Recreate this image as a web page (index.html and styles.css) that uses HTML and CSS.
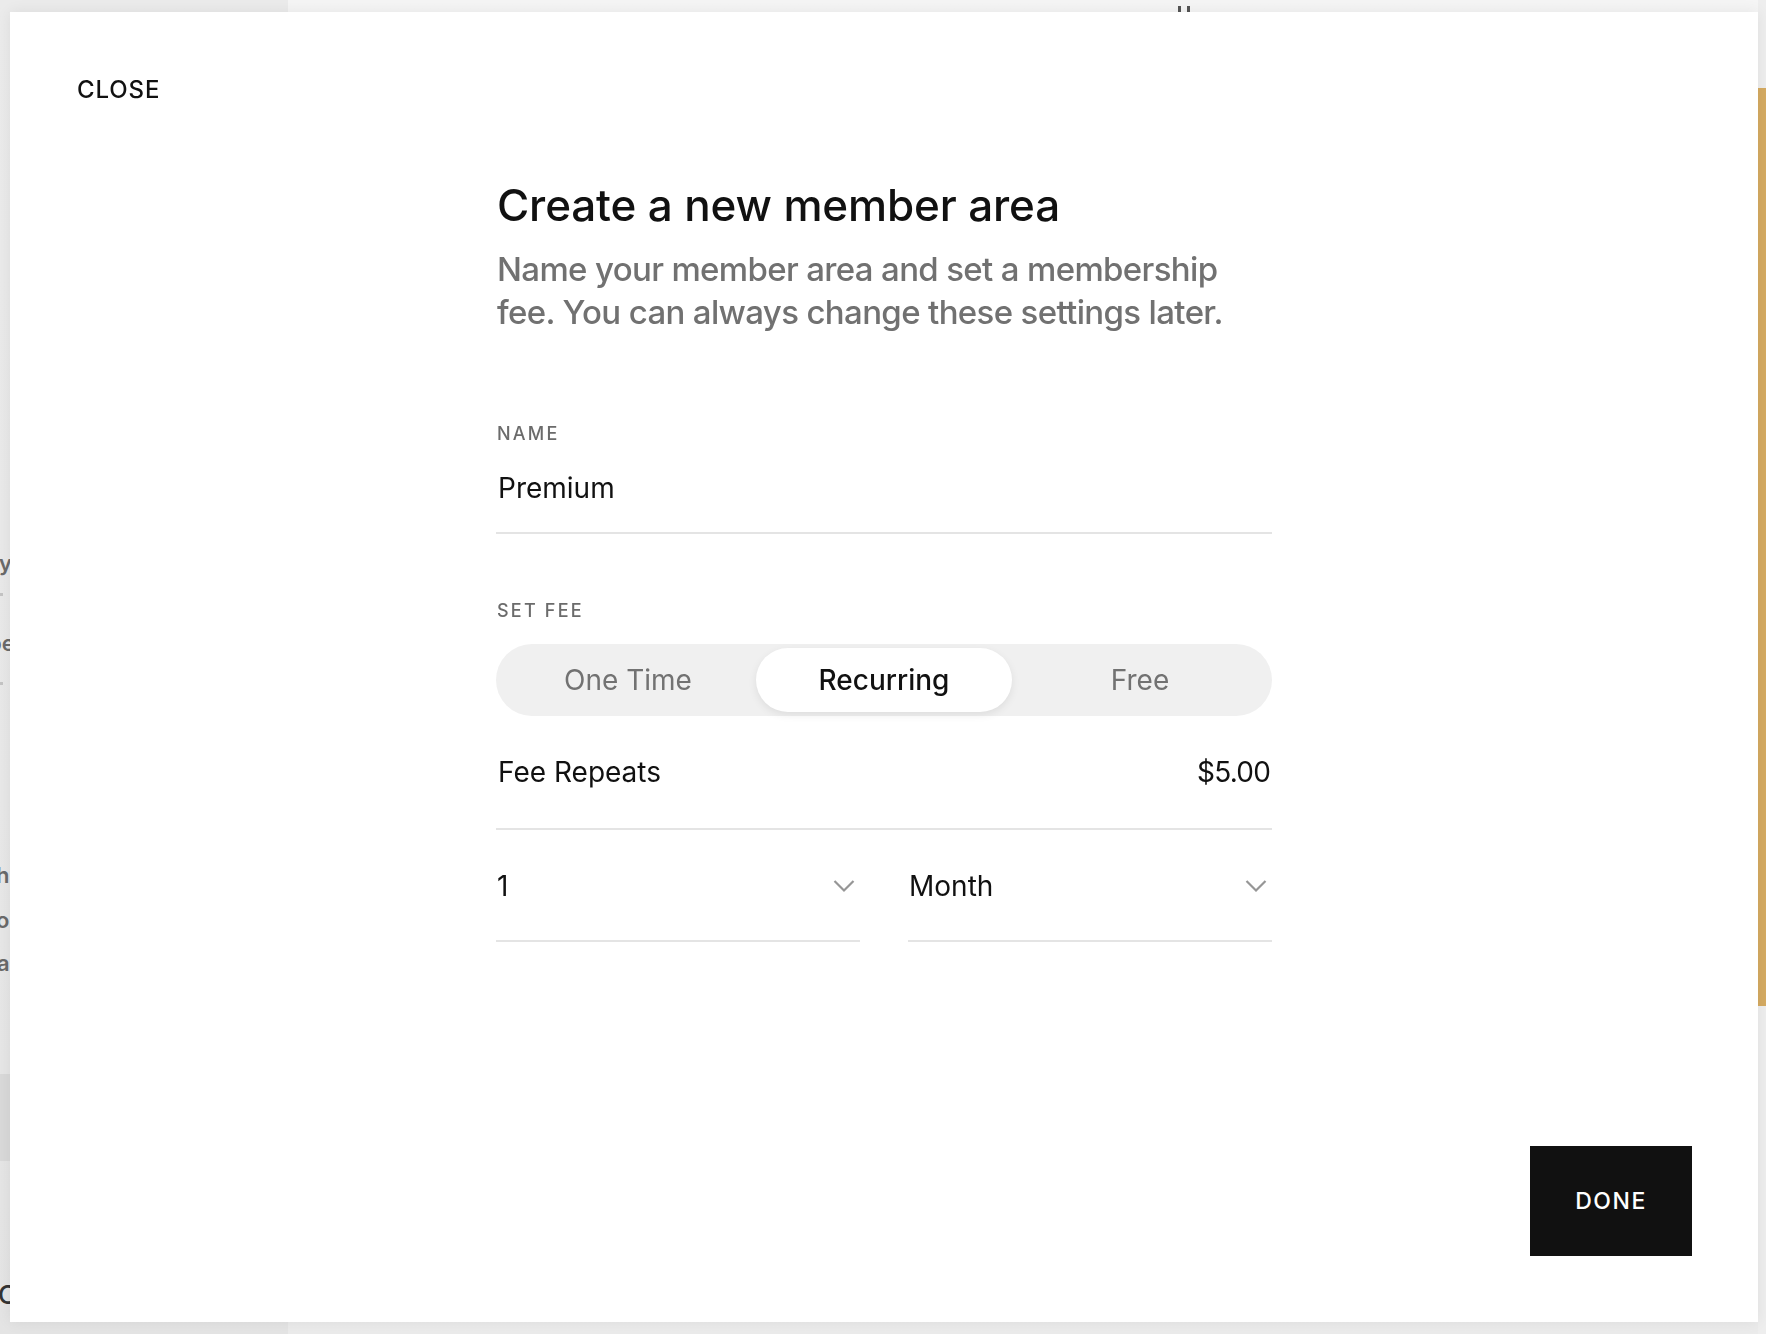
FILE: index.html
```html
<!DOCTYPE html>
<html lang="en">
<head>
<meta charset="utf-8">
<title>Create a new member area</title>
<link rel="stylesheet" href="styles.css">
</head>
<body>
  <div class="page">
    <aside class="sidebar">
      <div class="frag frag-y">y</div>
      <div class="dot dot-1"></div>
      <div class="frag frag-pe">pe</div>
      <div class="dot dot-2"></div>
      <div class="frag frag-h">h</div>
      <div class="frag frag-o">o</div>
      <div class="frag frag-a">a</div>
      <div class="side-block"></div>
      <div class="frag frag-c">C</div>
    </aside>
    <main class="main-bg">
      <div class="ticks"></div>
    </main>
    <div class="edge">
      <div class="gold"></div>
    </div>
  </div>

  <div class="modal">
    <header class="modal-head">
      <button class="close-btn">CLOSE</button>
    </header>

    <section class="form">
      <h1 class="title">Create a new member area</h1>
      <p class="subtitle">Name your member area and set a membership fee. You can always change these settings later.</p>

      <div class="label label-name">NAME</div>
      <div class="field name-field">Premium</div>

      <div class="label label-fee">SET FEE</div>
      <div class="segmented">
        <div class="seg">One Time</div>
        <div class="seg seg-active">Recurring</div>
        <div class="seg">Free</div>
      </div>

      <div class="fee-row">
        <span>Fee Repeats</span>
        <span class="price">$5.00</span>
      </div>

      <div class="selects">
        <div class="select">
          <span>1</span>
          <svg class="chev" width="22" height="14" viewBox="0 0 22 14"><polyline points="1.5,2 11,11.5 20.5,2" fill="none" stroke="#969696" stroke-width="2.2"/></svg>
        </div>
        <div class="select">
          <span>Month</span>
          <svg class="chev" width="22" height="14" viewBox="0 0 22 14"><polyline points="1.5,2 11,11.5 20.5,2" fill="none" stroke="#969696" stroke-width="2.2"/></svg>
        </div>
      </div>
    </section>

    <footer class="modal-foot">
      <button class="done-btn">DONE</button>
    </footer>
  </div>
</body>
</html>
```

FILE: styles.css
```css
* { box-sizing: border-box; }

html, body {
  margin: 0;
  padding: 0;
  width: 100%;
  height: 100%;
  overflow: hidden;
}

body {
  font-family: "Inter", "Liberation Sans", sans-serif;
  background: #f2f2f2;
}

/* ---------- background page ---------- */
.page {
  display: flex;
  height: 100vh;
}

.sidebar {
  width: 288px;
  flex: none;
  background: linear-gradient(180deg, #ebebeb 0%, #e8e8e8 60%, #e4e4e4 100%);
  padding-top: 549px;
  display: flex;
  flex-direction: column;
  font-size: 22px;
  font-weight: 600;
  color: #6a6a6a;
}

.frag {
  height: 28px;
  line-height: 28px;
  margin-left: -2px;
}
.frag-y { margin-left: -1px; }
.frag-pe { margin-top: 33px; margin-left: -12px; }
.frag-h { margin-top: 176px; margin-left: -4px; }
.frag-o { margin-top: 17px; margin-left: -4px; }
.frag-a { margin-top: 15px; margin-left: -3px; }
.frag-c { margin-top: 120px; margin-left: -2px; font-size: 26px; color: #333; font-weight: 500; }

.dot {
  width: 3px;
  height: 3px;
  background: #c4c4c4;
}
.dot-1 { margin-top: 16px; }
.dot-2 { margin-top: 25px; }

.side-block {
  margin-top: 97px;
  height: 87px;
  background: #d9d9d9;
}

.main-bg {
  flex: 1;
  background: linear-gradient(180deg, #f5f5f5 0%, #f1f1f1 50%, #ebebeb 100%);
}

.ticks {
  margin-left: 890px;
  margin-top: 6px;
  width: 12px;
  height: 6px;
  border-left: 3px solid #555;
  border-right: 3px solid #555;
}

.edge {
  width: 8px;
  flex: none;
  background: #eeeeee;
  padding-top: 88px;
}

.gold {
  height: 918px;
  background: #d5ab62;
}

/* ---------- modal ---------- */
.modal {
  position: fixed;
  top: 12px;
  left: 10px;
  right: 8px;
  bottom: 12px;
  background: #ffffff;
  box-shadow: 0 0 14px rgba(0, 0, 0, 0.07);
  display: flex;
  flex-direction: column;
}

.modal-head {
  padding: 66px 0 0 67px;
}

.close-btn {
  border: 0;
  background: none;
  padding: 0;
  font-family: inherit;
  font-size: 24px;
  line-height: 24px;
  font-weight: 500;
  letter-spacing: 0.9px;
  color: #111;
  cursor: pointer;
}

.form {
  width: 776px;
  margin: 79px auto 0;
  display: flex;
  flex-direction: column;
}

.title {
  margin: 0 0 0 1px;
  font-size: 44px;
  line-height: 48px;
  font-weight: 500;
  color: #111;
  letter-spacing: -0.15px;
}

.subtitle {
  margin: 19px 0 0 1px;
  width: 776px;
  font-size: 33px;
  line-height: 43px;
  font-weight: 500;
  letter-spacing: -0.65px;
  color: #717171;
}

.label {
  font-size: 18px;
  line-height: 22px;
  font-weight: 500;
  letter-spacing: 2.2px;
  color: #6b6b6b;
  margin-left: 1px;
}
.label-name { margin-top: 89px; }
.label-fee { margin-top: 66px; }

.field {
  font-size: 28px;
  line-height: 32px;
  color: #111;
}

.name-field {
  margin-top: 27px;
  padding: 0 0 28px 2px;
  border-bottom: 2px solid #e4e4e4;
}

.segmented {
  margin-top: 22px;
  height: 72px;
  padding: 4px;
  border-radius: 36px;
  background: #f0f0f0;
  display: grid;
  grid-template-columns: 1fr 1fr 1fr;
}

.seg {
  display: flex;
  align-items: center;
  justify-content: center;
  border-radius: 32px;
  font-size: 28px;
  color: #727272;
}

.seg-active {
  background: #ffffff;
  color: #111;
  font-weight: 500;
  box-shadow: 0 3px 8px rgba(0, 0, 0, 0.08);
}

.fee-row {
  margin-top: 40px;
  padding: 0 2px 40px 2px;
  border-bottom: 2px solid #e4e4e4;
  display: flex;
  justify-content: space-between;
  font-size: 28px;
  line-height: 32px;
  color: #111;
}

.price { letter-spacing: -0.8px; }

.selects {
  display: grid;
  grid-template-columns: 1fr 1fr;
  column-gap: 48px;
}

.select {
  display: flex;
  align-items: center;
  justify-content: space-between;
  padding: 40px 5px 38px 1px;
  border-bottom: 2px solid #e4e4e4;
  font-size: 28px;
  line-height: 32px;
  color: #111;
}

.chev { display: block; }

.modal-foot {
  margin-top: auto;
  display: flex;
  justify-content: flex-end;
  padding: 0 66px 66px 0;
}

.done-btn {
  width: 162px;
  height: 110px;
  border: 0;
  background: #111111;
  color: #ffffff;
  font-family: inherit;
  font-size: 23px;
  font-weight: 500;
  letter-spacing: 1.5px;
  cursor: pointer;
}
```
